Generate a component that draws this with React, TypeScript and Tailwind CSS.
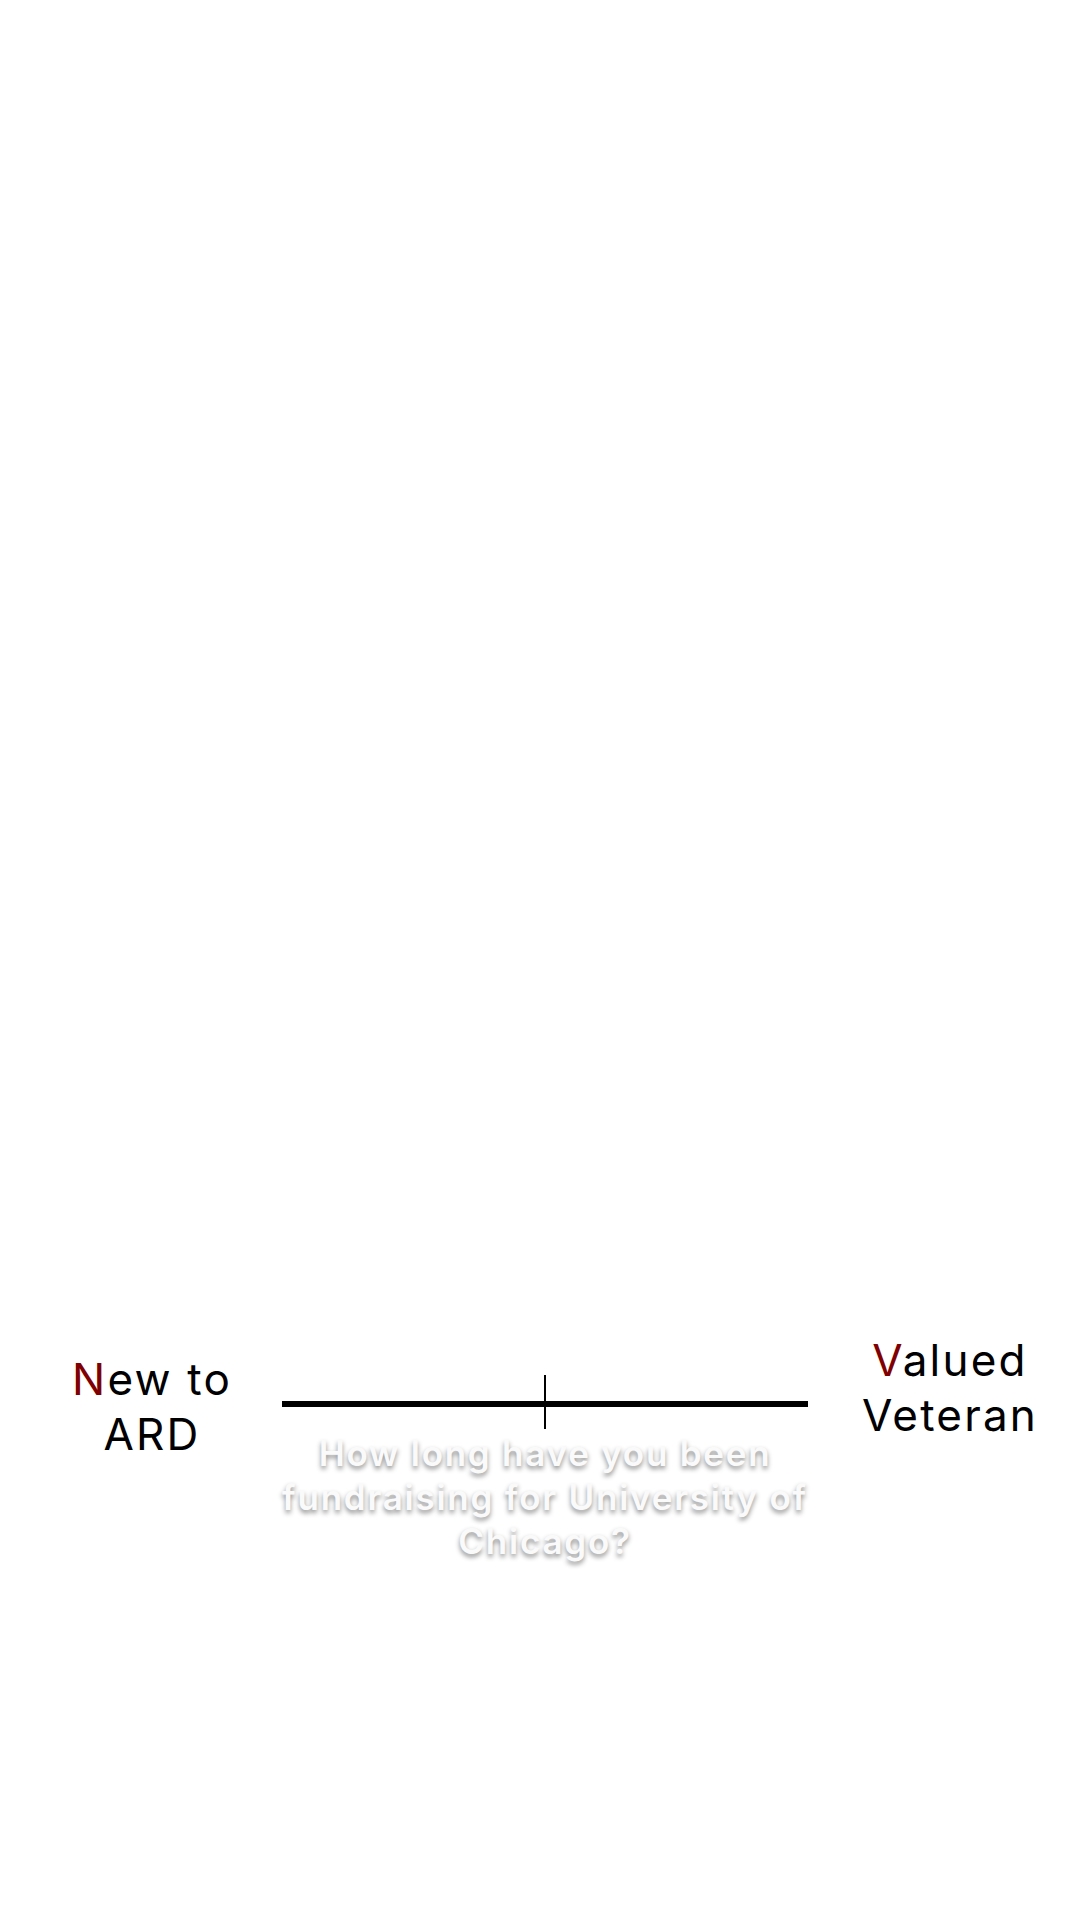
import React from 'react';

const font = { fontFamily: 'Inter, "Noto Sans", sans-serif' };

const App = () => {
  return (
    <div className="h-[1920px] w-[1080px] bg-white" style={font}>
      <div className="grid grid-cols-[260px_526px_272px] pl-[22px] pt-[1333px]">
        {/* left label */}
        <div className="mt-[19px] text-center text-[44px] leading-[55px] tracking-[0.05em] text-black">
          <span className="text-[#800000]">N</span>ew to
          <br />
          ARD
        </div>

        {/* slider */}
        <div className="mt-[42px] flex flex-col items-center">
          <div className="relative h-[54px] w-full">
            <div className="absolute left-0 right-0 top-[26px] h-[6px] bg-black" />
            <div className="absolute left-[262px] top-0 h-[54px] w-[2px] bg-black" />
          </div>
          <p className="mt-[2px] w-full whitespace-nowrap text-center text-[35px] font-semibold leading-[44px] tracking-[0.05em] text-[#fafafa] [text-shadow:0_3px_5px_rgba(0,0,0,0.45)]">
            How long have you been
            <br />
            fundraising for University of
            <br />
            Chicago?
          </p>
        </div>

        {/* right label */}
        <div className="pl-[12px] text-center text-[44px] leading-[55px] tracking-[0.05em] text-black">
          <span className="text-[#800000]">V</span>alued
          <br />
          Veteran
        </div>
      </div>
    </div>
  );
};

export default App;
